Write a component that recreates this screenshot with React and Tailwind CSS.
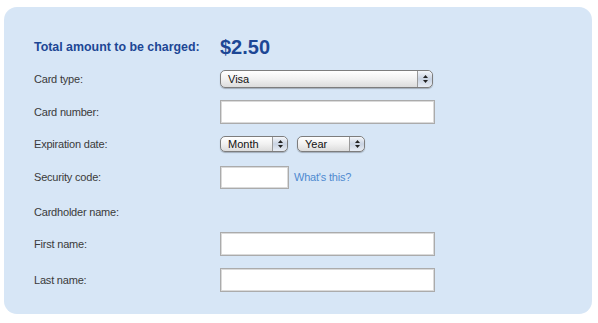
import React from "react";

function Stepper() {
  return (
    <div className="flex h-full w-[15px] items-center justify-center border-l border-[#9a9a9a] bg-gradient-to-b from-[#f4f6fa] via-[#c9d3e2] to-[#e8edf5] rounded-r-[5px]">
      <svg width="7" height="10" viewBox="0 0 7 10">
        <path d="M3.5 1 L6 4 L1 4 Z" fill="#222" />
        <path d="M3.5 9 L6 6 L1 6 Z" fill="#222" />
      </svg>
    </div>
  );
}

function Select({ label, width, height }) {
  return (
    <div
      className={`flex items-stretch rounded-[5px] border border-[#7d7d7d] bg-gradient-to-b from-[#ffffff] via-[#f1f1f1] to-[#dcdcdc] shadow-[0_1px_1px_rgba(0,0,0,0.25)] ${width} ${height}`}
    >
      <div className="flex flex-1 items-center pl-[7px] text-[11px] leading-none text-[#111]">
        {label}
      </div>
      <Stepper />
    </div>
  );
}

function Input({ width }) {
  return (
    <div
      className={`h-full bg-white border border-[#ababab] shadow-[inset_0_0_0_1px_#dadada] ${width}`}
    />
  );
}

function Row({ label, mt, h, children }) {
  return (
    <div className={`flex items-center ${mt} ${h}`}>
      <div className="w-[186px] shrink-0 text-[11px] tracking-[-0.2px] text-[#3a3a3a]">
        {label}
      </div>
      <div className="flex h-full items-center">{children}</div>
    </div>
  );
}

export default function App() {
  return (
    <div
      className="w-[598px] h-[323px] bg-white pt-[7px] pl-[4px]"
      style={{ fontFamily: '"Liberation Sans", Arial, sans-serif' }}
    >
      <div className="w-[588px] h-[307px] rounded-[13px] bg-[#d7e6f6] pl-[30px] pt-[28px]">
        <div className="flex h-[24px] items-center">
          <div className="w-[186px] shrink-0 text-[12.4px] font-bold text-[#1d4795]">
            Total amount to be charged:
          </div>
          <div className="text-[20px] font-bold leading-none text-[#1d4795]">$2.50</div>
        </div>
        <Row label="Card type:" mt="mt-[11px]" h="h-[18px]">
          <Select label="Visa" width="w-[213px]" height="h-[18px]" />
        </Row>
        <Row label="Card number:" mt="mt-[12px]" h="h-[24px]">
          <Input width="w-[215px]" />
        </Row>
        <Row label="Expiration date:" mt="mt-[12px]" h="h-[16px]">
          <div className="flex h-full gap-[9px]">
            <Select label="Month" width="w-[68px]" height="h-[16px]" />
            <Select label="Year" width="w-[68px]" height="h-[16px]" />
          </div>
        </Row>
        <Row label="Security code:" mt="mt-[14px]" h="h-[23px]">
          <Input width="w-[69px]" />
          <span className="ml-[5px] text-[11px] tracking-[-0.2px] text-[#4f8ad0]">What's this?</span>
        </Row>
        <Row label="Cardholder name:" mt="mt-[15px]" h="h-[16px]" />
        <Row label="First name:" mt="mt-[12px]" h="h-[24px]">
          <Input width="w-[215px]" />
        </Row>
        <Row label="Last name:" mt="mt-[12px]" h="h-[24px]">
          <Input width="w-[215px]" />
        </Row>
      </div>
    </div>
  );
}
